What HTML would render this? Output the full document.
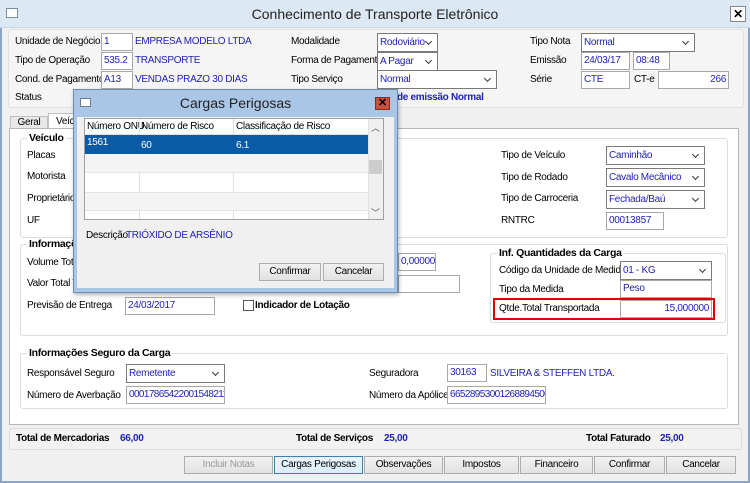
<!DOCTYPE html>
<html><head><meta charset="utf-8"><style>
*{box-sizing:border-box;margin:0;padding:0}
body{width:750px;height:483px;overflow:hidden;background:#f0f0f0;font-family:"Liberation Sans",sans-serif;font-size:10px;letter-spacing:-0.3px;color:#000;position:relative}
.a{position:absolute;white-space:nowrap}
.in{position:absolute;background:#fff;border:1px solid #a8a8a8;color:#2222b8;padding:1px 2px;height:18px;line-height:14px;white-space:nowrap;overflow:hidden}
.cb{position:absolute;background:#fff;border:1px solid #7a7a7a;color:#2222b8;padding:1px 2px;height:19px;line-height:15px;white-space:nowrap}
.cb:after{content:"";position:absolute;right:6px;top:5px;width:4px;height:4px;border-right:1.5px solid #333;border-bottom:1.5px solid #333;transform:rotate(45deg)}
.bl{color:#2222b8}
.g{position:absolute;border:1px solid #dcdcdc;border-radius:3px}
.gt{position:absolute;background:#fff;font-weight:bold;padding:0 2px;top:-7px;left:6px;font-size:10.5px}
.btn{position:absolute;height:18px;border:1px solid #adadad;background:linear-gradient(#f2f2f2,#e2e2e2);text-align:center;line-height:16px;white-space:nowrap;overflow:hidden}
</style></head><body>
<div class="a" style="left:0;top:0;width:750px;height:483px;border:2px solid #8aa5c8;border-top:none"></div>
<div class="a" style="left:0;top:0;width:750px;height:28px;background:#dde8f5;border-bottom:1px solid #c8d6e8"></div>
<div class="a" style="left:6px;top:8px;width:12px;height:10px;border:1px solid #7a8ea8;background:#fff"></div>
<div class="a" style="left:0;top:6px;width:750px;text-align:center;font-size:14px;letter-spacing:0;color:#222">Conhecimento de Transporte Eletrônico</div>
<div class="a" style="left:730px;top:6px;width:16px;height:16px;border:1px solid #888;background:#fff;text-align:center;font-weight:bold;font-size:12px;line-height:14px">✕</div>

<div class="a" style="left:8px;top:29px;width:736px;height:79px;background:#f5f5f5;border:1px solid #e0e0e0;border-radius:3px"></div>
<div class="a" style="left:15px;top:36px">Unidade de Negócio</div>
<div class="in" style="left:101px;top:33px;width:32px">1</div>
<div class="a bl" style="left:135px;top:36px">EMPRESA MODELO LTDA</div>
<div class="a" style="left:15px;top:55px">Tipo de Operação</div>
<div class="in" style="left:101px;top:52px;width:32px">535.2</div>
<div class="a bl" style="left:135px;top:55px">TRANSPORTE</div>
<div class="a" style="left:15px;top:74px">Cond. de Pagamento</div>
<div class="in" style="left:101px;top:71px;width:32px">A13</div>
<div class="a bl" style="left:135px;top:74px">VENDAS PRAZO 30 DIAS</div>
<div class="a" style="left:15px;top:92px">Status</div>
<div class="a" style="left:291px;top:36px">Modalidade</div>
<div class="cb" style="left:377px;top:33px;width:61px">Rodoviário</div>
<div class="a" style="left:291px;top:55px">Forma de Pagamento</div>
<div class="cb" style="left:377px;top:52px;width:61px">A Pagar</div>
<div class="a" style="left:291px;top:74px">Tipo Serviço</div>
<div class="cb" style="left:377px;top:70px;width:120px">Normal</div>
<div class="a bl" style="left:397px;top:92px;font-weight:bold">de emissão Normal</div>
<div class="a" style="left:530px;top:36px">Tipo Nota</div>
<div class="cb" style="left:581px;top:33px;width:114px">Normal</div>
<div class="a" style="left:530px;top:55px">Emissão</div>
<div class="in" style="left:581px;top:52px;width:49px">24/03/17</div>
<div class="in" style="left:633px;top:52px;width:37px">08:48</div>
<div class="a" style="left:530px;top:74px">Série</div>
<div class="in" style="left:581px;top:71px;width:49px">CTE</div>
<div class="a" style="left:634px;top:74px">CT-e</div>
<div class="in" style="left:658px;top:71px;width:71px;text-align:right">266</div>

<div class="a" style="left:10px;top:116px;width:38px;height:13px;border:1px solid #c0c0c0;border-bottom:none;background:#e8e8e8;text-align:center;line-height:12px">Geral</div>
<div class="a" style="left:48px;top:113px;width:50px;height:16px;border:1px solid #c0c0c0;border-bottom:none;background:#fff;padding-left:7px;line-height:15px">Veículo</div>
<div class="a" style="left:9px;top:128px;width:730px;height:297px;background:#fff;border:1px solid #b8b8b8"></div>

<div class="g" style="left:20px;top:138px;width:708px;height:100px"><span class="gt">Veículo</span></div>
<div class="a" style="left:27px;top:150px">Placas</div>
<div class="a" style="left:27px;top:171px">Motorista</div>
<div class="a" style="left:27px;top:193px">Proprietário</div>
<div class="a" style="left:27px;top:215px">UF</div>
<div class="a" style="left:501px;top:150px">Tipo de Veículo</div>
<div class="cb" style="left:606px;top:146px;width:99px">Caminhão</div>
<div class="a" style="left:501px;top:172px">Tipo de Rodado</div>
<div class="cb" style="left:606px;top:168px;width:99px">Cavalo Mecânico</div>
<div class="a" style="left:501px;top:193px">Tipo de Carroceria</div>
<div class="cb" style="left:606px;top:190px;width:99px">Fechada/Baú</div>
<div class="a" style="left:501px;top:215px">RNTRC</div>
<div class="in" style="left:606px;top:212px;width:58px">00013857</div>

<div class="g" style="left:20px;top:244px;width:708px;height:92px"><span class="gt">Informações</span></div>
<div class="a" style="left:27px;top:257px">Volume Total</div>
<div class="a" style="left:27px;top:278px">Valor Total T</div>
<div class="in" style="left:398px;top:253px;width:38px">0,00000</div>
<div class="in" style="left:398px;top:275px;width:62px"></div>
<div class="a" style="left:27px;top:300px">Previsão de Entrega</div>
<div class="in" style="left:125px;top:297px;width:90px">24/03/2017</div>
<div class="a" style="left:243px;top:300px;width:11px;height:11px;border:1px solid #555;background:#fff"></div>
<div class="a" style="left:255px;top:300px;font-weight:bold">Indicador de Lotação</div>

<div class="g" style="left:490px;top:253px;width:236px;height:70px;background:#fff"><span class="gt">Inf. Quantidades da Carga</span></div>
<div class="a" style="left:499px;top:265px">Código da Unidade de Medida</div>
<div class="cb" style="left:620px;top:261px;width:92px">01 - KG</div>
<div class="a" style="left:499px;top:284px">Tipo da Medida</div>
<div class="in" style="left:620px;top:280px;width:92px">Peso</div>
<div class="a" style="left:493px;top:298px;width:222px;height:22px;border:2px solid #e00000"></div>
<div class="a" style="left:499px;top:303px">Qtde.Total Transportada</div>
<div class="in" style="left:620px;top:300px;width:92px;text-align:right">15,000000</div>

<div class="g" style="left:20px;top:353px;width:708px;height:56px"><span class="gt">Informações Seguro da Carga</span></div>
<div class="a" style="left:27px;top:368px">Responsável Seguro</div>
<div class="cb" style="left:126px;top:364px;width:99px">Remetente</div>
<div class="a" style="left:27px;top:390px">Número de Averbação</div>
<div class="in" style="left:126px;top:386px;width:99px;letter-spacing:-0.6px">00017865422001548211</div>
<div class="a" style="left:369px;top:368px">Seguradora</div>
<div class="in" style="left:447px;top:364px;width:40px">30163</div>
<div class="a bl" style="left:490px;top:368px">SILVEIRA &amp; STEFFEN LTDA.</div>
<div class="a" style="left:369px;top:390px">Número da Apólice</div>
<div class="in" style="left:447px;top:386px;width:99px;letter-spacing:-0.6px">66528953001268894500</div>

<div class="a" style="left:9px;top:428px;width:733px;height:22px;border:1px solid #dcdcdc;border-radius:3px;background:#f2f2f2"></div>
<div class="a" style="left:16px;top:433px;font-weight:bold">Total de Mercadorias</div>
<div class="a bl" style="left:120px;top:433px;font-weight:bold">66,00</div>
<div class="a" style="left:296px;top:433px;font-weight:bold">Total de Serviços</div>
<div class="a bl" style="left:384px;top:433px;font-weight:bold">25,00</div>
<div class="a" style="left:586px;top:433px;font-weight:bold">Total Faturado</div>
<div class="a bl" style="left:660px;top:433px;font-weight:bold">25,00</div>

<div class="btn" style="left:184px;top:456px;width:89px;color:#999">Incluir Notas</div>
<div class="btn" style="left:274px;top:456px;width:89px;border-color:#3c7fb1;background:linear-gradient(#eaf5fc,#d9eefa)">Cargas Perigosas</div>
<div class="btn" style="left:364px;top:456px;width:79px">Observações</div>
<div class="btn" style="left:444px;top:456px;width:75px">Impostos</div>
<div class="btn" style="left:520px;top:456px;width:73px">Financeiro</div>
<div class="btn" style="left:594px;top:456px;width:71px">Confirmar</div>
<div class="btn" style="left:666px;top:456px;width:70px">Cancelar</div>

<div class="a" style="left:73px;top:89px;width:325px;height:204px;background:#aac6e6;border:1px solid #6c8fb8;box-shadow:1px 2px 4px rgba(0,0,0,.3)"></div>
<div class="a" style="left:80px;top:98px;width:11px;height:9px;border:1px solid #6a7e98;background:#fff"></div>
<div class="a" style="left:73px;top:95px;width:325px;text-align:center;font-size:14px;letter-spacing:0;color:#222">Cargas Perigosas</div>
<div class="a" style="left:375px;top:97px;width:15px;height:13px;background:#c7503f;border:1px solid #8a2b20;color:#000;text-align:center;font-weight:bold;font-size:11px;line-height:11px">✕</div>
<div class="a" style="left:77px;top:117px;width:317px;height:171px;background:#f0f0f0"></div>
<div class="a" style="left:84px;top:118px;width:300px;height:102px;background:#fff;border:1px solid #a0a0a0"></div>
<div class="a" style="left:85px;top:119px;width:283px;height:16px;background:#fff;border-bottom:1px solid #e0e0e0"></div>
<div class="a" style="left:87px;top:121px">Número ONU</div>
<div class="a" style="left:139px;top:119px;width:1px;height:100px;background:#e0e0e0"></div>
<div class="a" style="left:141px;top:121px">Número de Risco</div>
<div class="a" style="left:233px;top:119px;width:1px;height:100px;background:#e0e0e0"></div>
<div class="a" style="left:236px;top:121px">Classificação de Risco</div>
<div class="a" style="left:85px;top:135px;width:283px;height:19px;background:#0a5aa6"></div>
<div class="a" style="left:87px;top:137px;color:#fff">1561</div>
<div class="a" style="left:141px;top:140px;color:#fff">60</div>
<div class="a" style="left:236px;top:140px;color:#fff">6.1</div>
<div class="a" style="left:85px;top:154px;width:283px;height:19px;background:#f4f4f4;border-bottom:1px solid #e4e4e4"></div>
<div class="a" style="left:85px;top:192px;width:283px;height:19px;background:#f4f4f4;border-top:1px solid #e4e4e4;border-bottom:1px solid #e4e4e4"></div>
<div class="a" style="left:368px;top:119px;width:15px;height:100px;background:#f0f0f0;border-left:1px solid #e0e0e0"></div>
<div class="a" style="left:369px;top:160px;width:13px;height:14px;background:#cdcdcd"></div>
<div class="a" style="left:371px;top:121px;font-size:9px;color:#555">︿</div>
<div class="a" style="left:371px;top:206px;font-size:9px;color:#555">﹀</div>
<div class="a" style="left:86px;top:230px">Descrição</div>
<div class="a bl" style="left:126px;top:230px">TRIÓXIDO DE ARSÊNIO</div>
<div class="btn" style="left:259px;top:263px;width:62px">Confirmar</div>
<div class="btn" style="left:323px;top:263px;width:61px">Cancelar</div>
</body></html>
